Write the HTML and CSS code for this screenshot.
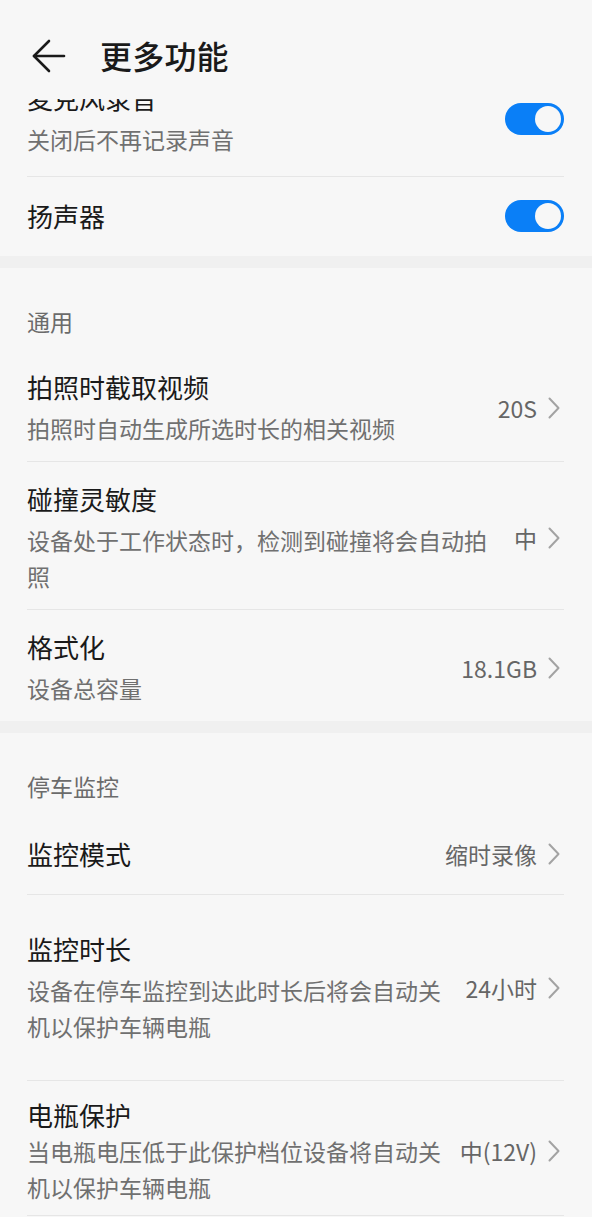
FILE: index.html
```html
<!DOCTYPE html>
<html lang="zh-CN">
<head>
<meta charset="utf-8">
<title>更多功能</title>
<link rel="stylesheet" href="styles.css">
</head>
<body>
<header class="topbar">
  <svg class="back" width="34" height="34" viewBox="0 0 34 34" fill="none" stroke="#1a1a1a" stroke-width="2.6" stroke-linecap="round" stroke-linejoin="round">
    <path d="M2 17H32"/>
    <path d="M17 2L2 17L17 32"/>
  </svg>
  <h1 class="topbar-title">更多功能</h1>
</header>

<main class="content">
  <section class="group">
    <div class="row row--first">
      <div class="row-text">
        <div class="row-title">麦克风录音</div>
        <div class="row-sub">关闭后不再记录声音</div>
      </div>
      <span class="switch"><span class="knob"></span></span>
    </div>
    <div class="row row--single">
      <div class="row-text">
        <div class="row-title">扬声器</div>
      </div>
      <span class="switch"><span class="knob"></span></span>
    </div>
  </section>

  <section class="group">
    <div class="group-label">通用</div>
    <div class="row">
      <div class="row-text">
        <div class="row-title">拍照时截取视频</div>
        <div class="row-sub">拍照时自动生成所选时长的相关视频</div>
      </div>
      <span class="row-value">20S<svg class="chev" width="12" height="22" viewBox="0 0 12 22" fill="none" stroke="#a3a3a3" stroke-width="2" stroke-linecap="round" stroke-linejoin="round"><path d="M1.5 1.5L10.5 11L1.5 20.5"/></svg></span>
    </div>
    <div class="row">
      <div class="row-text">
        <div class="row-title">碰撞灵敏度</div>
        <div class="row-sub">设备处于工作状态时，检测到碰撞将会自动拍照</div>
      </div>
      <span class="row-value">中<svg class="chev" width="12" height="22" viewBox="0 0 12 22" fill="none" stroke="#a3a3a3" stroke-width="2" stroke-linecap="round" stroke-linejoin="round"><path d="M1.5 1.5L10.5 11L1.5 20.5"/></svg></span>
    </div>
    <div class="row">
      <div class="row-text">
        <div class="row-title">格式化</div>
        <div class="row-sub">设备总容量</div>
      </div>
      <span class="row-value">18.1GB<svg class="chev" width="12" height="22" viewBox="0 0 12 22" fill="none" stroke="#a3a3a3" stroke-width="2" stroke-linecap="round" stroke-linejoin="round"><path d="M1.5 1.5L10.5 11L1.5 20.5"/></svg></span>
    </div>
  </section>

  <section class="group">
    <div class="group-label">停车监控</div>
    <div class="row row--single">
      <div class="row-text">
        <div class="row-title">监控模式</div>
      </div>
      <span class="row-value">缩时录像<svg class="chev" width="12" height="22" viewBox="0 0 12 22" fill="none" stroke="#a3a3a3" stroke-width="2" stroke-linecap="round" stroke-linejoin="round"><path d="M1.5 1.5L10.5 11L1.5 20.5"/></svg></span>
    </div>
    <div class="row row--tall">
      <div class="row-text">
        <div class="row-title">监控时长</div>
        <div class="row-sub">设备在停车监控到达此时长后将会自动关机以保护车辆电瓶</div>
      </div>
      <span class="row-value">24小时<svg class="chev" width="12" height="22" viewBox="0 0 12 22" fill="none" stroke="#a3a3a3" stroke-width="2" stroke-linecap="round" stroke-linejoin="round"><path d="M1.5 1.5L10.5 11L1.5 20.5"/></svg></span>
    </div>
    <div class="row row--tight">
      <div class="row-text">
        <div class="row-title">电瓶保护</div>
        <div class="row-sub">当电瓶电压低于此保护档位设备将自动关机以保护车辆电瓶</div>
      </div>
      <span class="row-value">中(12V)<svg class="chev" width="12" height="22" viewBox="0 0 12 22" fill="none" stroke="#a3a3a3" stroke-width="2" stroke-linecap="round" stroke-linejoin="round"><path d="M1.5 1.5L10.5 11L1.5 20.5"/></svg></span>
    </div>
  </section>
</main>
</body>
</html>
```

FILE: styles.css
```css
* {
  box-sizing: border-box;
}

html, body {
  margin: 0;
  padding: 0;
}

body {
  background: #f7f7f7;
  font-family: "Noto Sans CJK SC", "Noto Sans", sans-serif;
  color: #1a1a1a;
  width: 592px;
  height: 1217px;
  overflow: hidden;
  position: relative;
}

.topbar {
  position: absolute;
  top: 0;
  left: 0;
  right: 0;
  height: 99px;
  background: #f7f7f7;
  display: flex;
  align-items: center;
  padding: 12px 0 0 32px;
  z-index: 2;
}

.back {
  display: block;
}

.topbar-title {
  margin: -2px 0 0 34px;
  font-size: 32px;
  line-height: 40px;
  font-weight: 500;
  color: #1a1a1a;
  letter-spacing: 0.2px;
}

.content {
  padding-top: 65px;
}

.group {
  padding: 0 28px 0 27px;
  background: #f7f7f7;
}

.group + .group {
  border-top: 12px solid #f0f0f0;
}

.group-label {
  padding: 38px 0 14px;
  font-size: 23px;
  line-height: 30px;
  color: #6b6b6b;
}

.row {
  display: flex;
  align-items: center;
  gap: 12px;
  padding: 19px 0 15px;
  border-bottom: 1px solid #e6e6e6;
}

.group .row:last-child {
  border-bottom: none;
}

.group:last-child .row:last-child {
  border-bottom: 1px solid #e6e6e6;
}

.row--first {
  padding: 15px 0 19px;
}

.row--single {
  padding: 21px 0 22px;
}

.row--tall {
  padding: 36px 0 36px;
}

.row--tight {
  padding: 16px 0 10px;
}

.row-text {
  flex: 1;
  min-width: 0;
}

.row-title {
  font-size: 26px;
  line-height: 36px;
  color: #1a1a1a;
}

.row-sub {
  margin-top: 5px;
  font-size: 23px;
  line-height: 36px;
  color: #707070;
}

.row--tight .row-sub {
  margin-top: 0;
}

.row-value {
  display: flex;
  align-items: center;
  gap: 11px;
  font-size: 23px;
  line-height: 36px;
  color: #666666;
  white-space: nowrap;
  padding-right: 4px;
}

.chev {
  display: block;
  flex: none;
}

.switch {
  flex: none;
  width: 59px;
  height: 32px;
  border-radius: 16px;
  background: #0a7ff7;
  display: flex;
  align-items: center;
  justify-content: flex-end;
  padding-right: 3px;
}

.knob {
  width: 26px;
  height: 26px;
  border-radius: 50%;
  background: #f7f7f7;
}
```
